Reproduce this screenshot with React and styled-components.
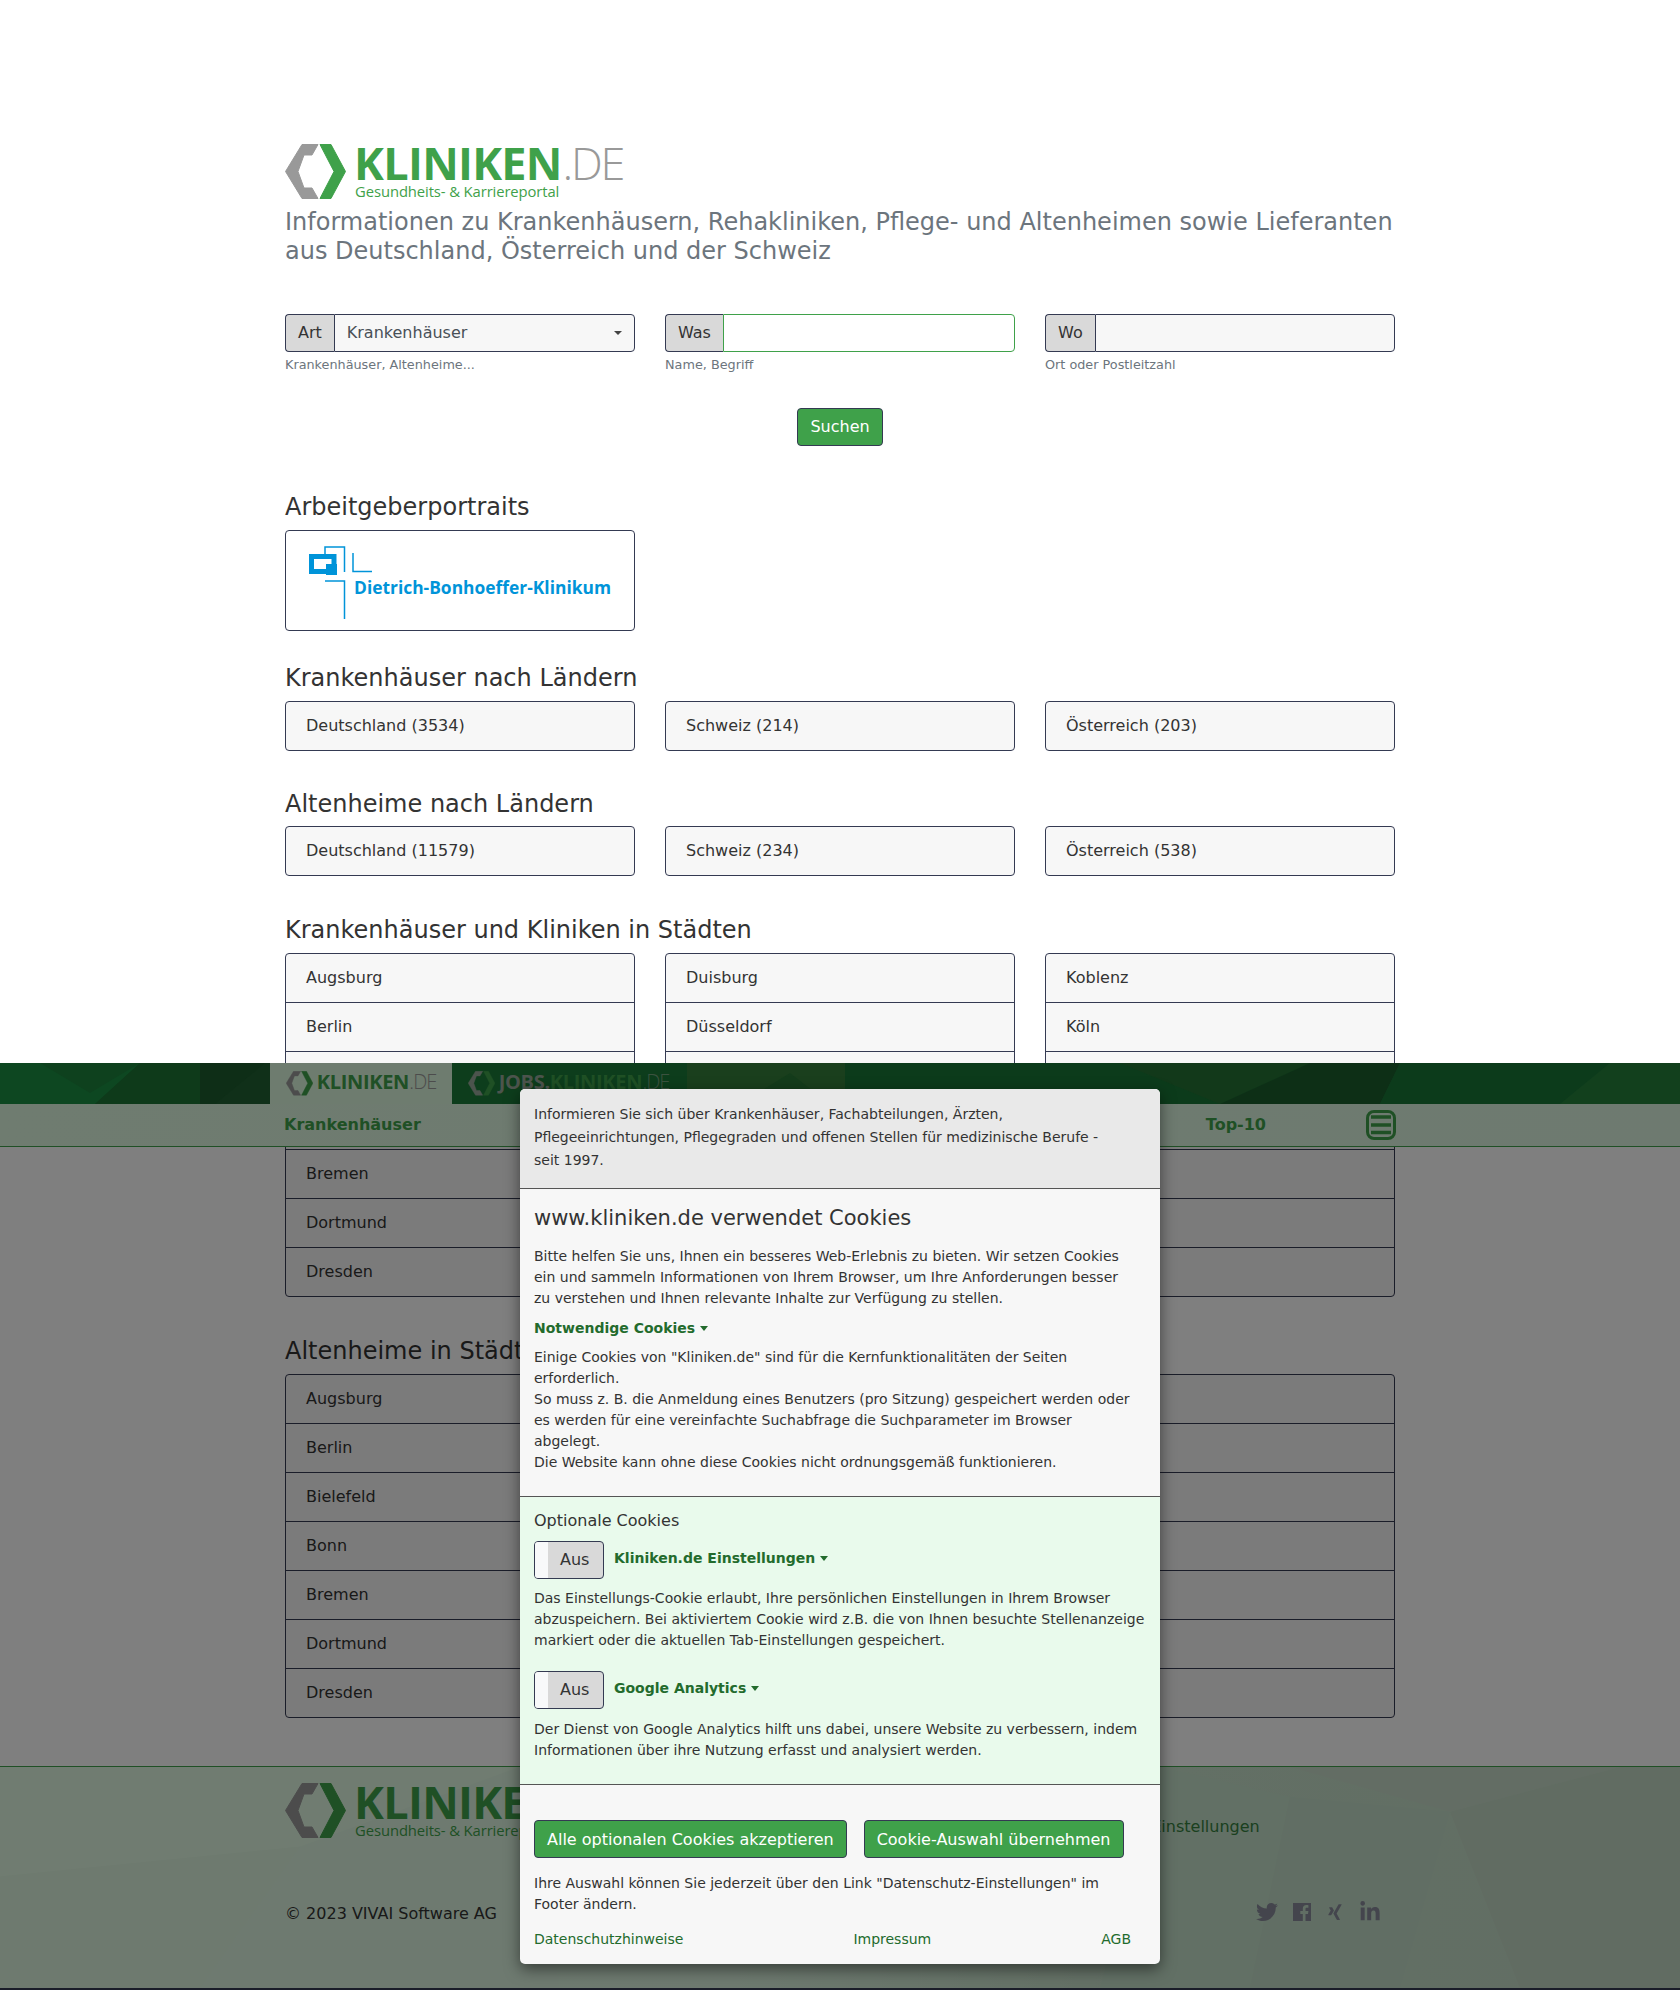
import React from "react";
import styled, { createGlobalStyle } from "styled-components";
import { FaTwitter, FaXing, FaLinkedinIn } from "react-icons/fa";

const cityColumns = [
  ["Augsburg", "Berlin", "Bielefeld", "Bonn", "Bremen", "Dortmund", "Dresden"],
  ["Duisburg", "Düsseldorf", "Essen", "Frankfurt", "Freiburg", "Hamburg", "Hannover"],
  ["Koblenz", "Köln", "Leipzig", "Mainz", "München", "Münster", "Rostock"],
];

const bandPolys = [
  ["0,0 140,0 95,41 0,41", "#1a8f42"],
  ["40,0 140,0 90,30", "#1c823d"],
  ["95,41 140,0 200,0 200,41", "#1c7434"],
  ["200,0 270,0 270,41 200,41", "#1c5c2e"],
  ["215,41 265,0 270,0 270,41", "#206032"],
  ["687,0 845,0 845,41 687,41", "#347f3a"],
  ["740,41 790,10 830,41", "#287836"],
  ["845,0 1120,0 1220,41 845,41", "#187637"],
  ["1120,0 1310,0 1220,41", "#247234"],
  ["1310,0 1400,0 1380,41 1220,41", "#1b5e2d"],
  ["1400,0 1610,0 1560,41 1380,41", "#197637"],
  ["1610,0 1680,0 1680,41 1560,41", "#24803b"],
];

const footerPolys = [
  ["0,0 520,0 300,80 0,110", "#e0f8e2"],
  ["300,80 520,0 560,222 200,222", "#dcf5e0"],
  ["0,110 300,80 200,222 0,222", "#dcf4de"],
  ["1160,0 1290,30 1250,222 1100,222", "#c4e0ca"],
  ["1290,30 1450,45 1400,222 1250,222", "#c2ddc8"],
  ["1450,45 1620,0 1680,0 1680,222 1520,222", "#c3d8c4"],
  ["1290,0 1620,0 1450,45", "#c6dbc8"],
];

const GlobalStyle = createGlobalStyle`
  html, body {
    margin: 0;
    padding: 0;
    background: #fff;
  }

  body {
    font-family: "DejaVu Sans", sans-serif;
    font-size: 16px;
    line-height: 1.5;
    color: #333;
  }

  * {
    box-sizing: border-box;
  }
`;

const Page = styled.div`
  position: relative;
  width: 1680px;
  height: 1990px;
  overflow: hidden;
`;

const Main = styled.main`
  width: 1110px;
  margin: 0 auto;
  padding-top: 144px;
`;

const LogoWrap = styled.div`
  display: flex;
  align-items: flex-start;
  font-size: ${props => props.$size}px;
  font-family: "Open Sans", sans-serif;
  line-height: 1;
`;

const LogoMark = styled.svg`
  flex: none;
  width: 1.356em;
  height: 1.222em;
`;

const LogoText = styled.div`
  margin-left: 0.18em;
`;

const LogoName = styled.div`
  display: flex;
  height: 0.84em;
  line-height: 0.84em;
  margin-top: ${props => props.$small ? "0.14em" : "0"};
  letter-spacing: -0.016em;
  font-weight: 700;
  color: ${props => props.$color || "#3fa14a"};
`;

const LogoTld = styled.span`
  margin-left: 0.02em;
  font-weight: 300;
  letter-spacing: -0.05em;
  color: ${props => props.$color || "#999"};
`;

const LogoPrefix = styled.span`
  color: #99a89b;
  font-weight: 700;
`;

const LogoClaim = styled.div`
  margin: 1px 0 0 1px;
  font-size: 14.8px;
  line-height: 16px;
  letter-spacing: -0.1px;
  color: #3fa14a;
  white-space: nowrap;
`;

const Tagline = styled.h2`
  margin: 9px 0 0;
  font-size: 24px;
  font-weight: 400;
  line-height: 29px;
  color: #6c757d;
`;

const SearchForm = styled.form`
  display: grid;
  grid-template-columns: repeat(3, 350px);
  column-gap: 30px;
  margin-top: 48px;
`;

const Field = styled.div`
  display: flex;
  flex-direction: column;
`;

const InputGroup = styled.div`
  display: flex;
  height: 38px;
`;

const GroupLabel = styled.span`
  display: flex;
  align-items: center;
  padding: 0 12px;
  background: #d9d9d9;
  border: 1px solid #343a52;
  border-right: 0;
  border-radius: 4px 0 0 4px;
  color: #333;
`;

const GroupControl = styled.div`
  position: relative;
  flex: 1;
  display: flex;
  align-items: center;
  padding: 0 12px;
  background: ${props => props.$active ? "#fff" : "#f7f7f7"};
  border: 1px solid ${props => props.$active ? "#3fa14a" : "#343a52"};
  border-radius: 0 4px 4px 0;
  color: #495057;
`;

const Caret = styled.i`
  position: absolute;
  right: 12px;
  top: 16px;
  border-top: 4px solid #444;
  border-left: 4px solid transparent;
  border-right: 4px solid transparent;
`;

const HelpText = styled.small`
  margin-top: 3px;
  font-size: 12.8px;
  line-height: 19px;
  color: #6c757d;
`;

const SubmitRow = styled.div`
  display: flex;
  justify-content: center;
  margin-top: 34px;
`;

const GreenButton = styled.button`
  height: 38px;
  padding: 0 12px;
  background: #3fa14a;
  border: 1px solid #343a52;
  border-radius: 4px;
  color: #fff;
  font-family: inherit;
  font-size: 16px;
`;

const Section = styled.section`
  margin-top: ${props => props.$top}px;
`;

const SectionTitle = styled.h4`
  margin: 0 0 8px;
  font-size: 24px;
  font-weight: 400;
  line-height: 28.8px;
  color: #333;
`;

const PortraitCard = styled.a`
  display: block;
  width: 350px;
  height: 101px;
  background: #fff;
  border: 1px solid #343a52;
  border-radius: 4px;
`;

const PortraitLogo = styled.svg`
  display: block;
  margin: -1px;
  width: 350px;
  height: 101px;
`;

const ListGrid = styled.div`
  display: grid;
  grid-template-columns: repeat(3, 350px);
  column-gap: 30px;
`;

const ItemList = styled.ul`
  margin: 0;
  padding: 0;
  list-style: none;
  background: #f7f7f7;
  border: 1px solid #343a52;
  border-radius: 4px;
`;

const Item = styled.li`
  height: ${props => props.$first ? 48 : 49}px;
  padding: 0 20px;
  line-height: 48px;
  color: #333;
  border-top: ${props => props.$first ? "0" : "1px solid #343a52"};
`;

const Footer = styled.footer`
  position: relative;
  margin-top: 48px;
  height: 224px;
  padding-top: 16px;
  background: linear-gradient(100deg, #def8e0 0%, #dcf5e0 45%, #c6e0ca 68%, #c4dcc8 100%);
  border-top: 1px solid #3fa14a;
  border-bottom: 2px solid #343a52;
`;

const PolyBackground = styled.svg`
  position: absolute;
  left: 0;
  top: 0;
  width: 100%;
  height: 100%;
`;

const FooterInner = styled.div`
  position: relative;
  width: 1110px;
  margin: 0 auto;
`;

const FooterTop = styled.div`
  display: grid;
  grid-template-columns: repeat(3, 350px);
  column-gap: 30px;
`;

const FooterLink = styled.a`
  align-self: end;
  margin-bottom: -1px;
  color: #36803f;
  white-space: nowrap;
`;

const FooterBottom = styled.div`
  display: flex;
  justify-content: space-between;
  align-items: center;
  margin-top: 64px;
  height: 24px;
`;

const Copyright = styled.span`
  color: #333;
`;

const SocialIcons = styled.div`
  display: flex;
  align-items: center;
  gap: 15px;
  margin: 0 14px 3px 0;
  color: #888b9a;

  svg {
    display: block;
  }
`;

const Header = styled.header`
  position: absolute;
  left: 0;
  top: 1063px;
  width: 100%;
`;

const TabBand = styled.div`
  position: relative;
  height: 41px;
  background: #1b7a38;
`;

const Tabs = styled.div`
  position: relative;
  display: flex;
  width: 1140px;
  height: 41px;
  margin: 0 auto;
`;

const Tab = styled.a`
  display: flex;
  align-items: center;
  width: ${props => props.$width}px;
  padding-left: ${props => props.$pad}px;
  background: ${props => props.$active ? "#dcf8de" : "#1b7a38"};
`;

const NavBar = styled.nav`
  display: flex;
  justify-content: space-between;
  align-items: center;
  height: 43px;
  padding: 0 284px;
  background: linear-gradient(90deg, #def8e0, #dcf5e0);
  border-bottom: 1px solid #3fa14a;
`;

const NavLink = styled.a`
  font-weight: 700;
  font-size: 16px;
  color: #3fa14a;
`;

const NavRight = styled.div`
  display: flex;
  align-items: center;
  gap: 100px;
`;

const MenuIcon = styled.svg`
  display: block;
  width: 30px;
  height: 30px;
`;

const Overlay = styled.div`
  position: absolute;
  left: 0;
  top: 1063px;
  width: 100%;
  height: 927px;
  background: rgba(0, 0, 0, 0.5);
`;

const Modal = styled.div`
  position: absolute;
  left: 520px;
  top: 1089px;
  width: 640px;
  height: 875px;
  background: #f7f7f7;
  border-radius: 5px;
  box-shadow: 0 5px 15px rgba(0, 0, 0, 0.5);
  overflow: hidden;
  font-size: 14px;
  line-height: 21px;
  color: #333;
`;

const ModalIntro = styled.div`
  height: 100px;
  padding: 14px 20px 0 14px;
  background: #e9e9e9;
  line-height: 23px;
  border-bottom: 1px solid #555;
`;

const ModalBody = styled.div`
  height: 308px;
  padding: 14px 24px 0 14px;
  border-bottom: 1px solid #555;
`;

const ModalTitle = styled.h5`
  margin: 0 0 13px;
  font-size: 21px;
  font-weight: 400;
  line-height: 30px;
  color: #333;
`;

const Paragraph = styled.p`
  margin: 0;
`;

const Disclosure = styled.a`
  display: inline-flex;
  align-items: center;
  gap: 5px;
  font-weight: 700;
  color: #236b2d;
`;

const DisclosureRow = styled.div`
  margin: 9px 0 8px;
`;

const DisclosureCaret = styled.i`
  border-top: 5px solid #236b2d;
  border-left: 4.5px solid transparent;
  border-right: 4.5px solid transparent;
`;

const OptionalPanel = styled.div`
  height: 288px;
  padding: 12px 14px 0;
  background: #e9faec;
  border-bottom: 1px solid #555;
`;

const OptionalTitle = styled.div`
  font-size: 16px;
  line-height: 24px;
  color: #333;
`;

const ToggleRow = styled.div`
  display: flex;
  align-items: center;
  gap: 10px;
  margin-top: ${props => props.$top}px;
  margin-bottom: ${props => props.$bottom}px;

  ${Disclosure} {
    margin-bottom: 3px;
  }
`;

const Toggle = styled.div`
  display: flex;
  width: 70px;
  height: 38px;
  background: #d9d9d9;
  border: 1px solid #343a52;
  border-radius: 4px;
  overflow: hidden;
  font-size: 16px;
  line-height: 36px;
  color: #333;
`;

const ToggleHandle = styled.span`
  flex: none;
  width: 13px;
  background: #f8f9fa;
`;

const ToggleLabel = styled.span`
  flex: 1;
  padding-left: 12px;
`;

const ModalFooter = styled.div`
  padding: 35px 14px 0;
`;

const ModalActions = styled.div`
  display: flex;
  gap: 17px;
`;

const FootNote = styled.p`
  margin: 15px 0 0;
`;

const LegalLinks = styled.div`
  display: flex;
  justify-content: space-between;
  margin-top: 14px;
  padding-right: 15px;
`;

const LegalLink = styled.a`
  color: #236b2d;
`;

const Polys = ({ items, width, height }) => (
  <PolyBackground viewBox={`0 0 ${width} ${height}`} preserveAspectRatio="none">
    {items.map(([points, fill]) => <polygon key={points} points={points} fill={fill} />)}
  </PolyBackground>
);

const HexMark = ({ gray = "#999", green = "#3fa14a" }) => (
  <LogoMark viewBox="0 0 61 55">
    <path
      d="M17 0.5 H33 L27 11 H19 L13 27.5 L19 44 H27 L33 54.5 H17 L0.5 27.5 Z"
      fill={gray} stroke={gray} strokeLinejoin="round"
    />
    <path
      d="M35 0.5 H46 L60.5 27.5 L46 54.5 H35 L49 27.5 Z"
      fill={green} stroke={green} strokeLinejoin="round"
    />
  </LogoMark>
);

const FacebookIcon = () => (
  <svg width="18" height="18" viewBox="0 0 18 18" fill="currentColor">
    <path
      fillRule="evenodd"
      d="M0 0H18V18H12.5V11H15L15.4 8H12.5V6.2C12.5 5.3 12.8 4.8 13.9 4.8H15.4V2.2C15.1 2.2 14.3 2.1 13.3 2.1C11.2 2.1 9.8 3.4 9.8 5.8V8H7.3V11H9.8V18H0Z"
    />
  </svg>
);

const Logo = () => (
  <LogoWrap $size={45}>
    <HexMark />
    <LogoText>
      <LogoName>KLINIKEN<LogoTld>.DE</LogoTld></LogoName>
      <LogoClaim>Gesundheits- &amp; Karriereportal</LogoClaim>
    </LogoText>
  </LogoWrap>
);

const Links = ({ items }) => (
  <ListGrid>
    {items.map(label => (
      <ItemList key={label}>
        <Item $first>{label}</Item>
      </ItemList>
    ))}
  </ListGrid>
);

const CityLists = () => (
  <ListGrid>
    {cityColumns.map(column => (
      <ItemList key={column[0]}>
        {column.map((city, i) => <Item key={city} $first={i === 0}>{city}</Item>)}
      </ItemList>
    ))}
  </ListGrid>
);

const App = () => (
  <Page>
    <GlobalStyle />
    <Main>
      <Logo />
      <Tagline>
        Informationen zu Krankenhäusern, Rehakliniken, Pflege- und Altenheimen sowie Lieferanten aus Deutschland, Österreich und der Schweiz
      </Tagline>

      <SearchForm>
        <Field>
          <InputGroup>
            <GroupLabel>Art</GroupLabel>
            <GroupControl>Krankenhäuser<Caret /></GroupControl>
          </InputGroup>
          <HelpText>Krankenhäuser, Altenheime...</HelpText>
        </Field>
        <Field>
          <InputGroup>
            <GroupLabel>Was</GroupLabel>
            <GroupControl $active />
          </InputGroup>
          <HelpText>Name, Begriff</HelpText>
        </Field>
        <Field>
          <InputGroup>
            <GroupLabel>Wo</GroupLabel>
            <GroupControl />
          </InputGroup>
          <HelpText>Ort oder Postleitzahl</HelpText>
        </Field>
      </SearchForm>
      <SubmitRow>
        <GreenButton type="button">Suchen</GreenButton>
      </SubmitRow>

      <Section $top={47}>
        <SectionTitle>Arbeitgeberportraits</SectionTitle>
        <PortraitCard>
          <PortraitLogo viewBox="0 0 350 101">
            <g fill="none" stroke="#0094d9">
              <path d="M40 24 V17 H59.5 V42" strokeWidth="1.5" />
              <path d="M68 23 V41.5 H87" strokeWidth="1.5" />
              <path d="M40 51 H59.5 V89" strokeWidth="1.5" />
              <path d="M41 41.5 H26.5 V26.5 H49 V36" strokeWidth="5" />
            </g>
            <rect x="41" y="34" width="11" height="11" fill="#0094d9" />
            <text
              x="69" y="63.5" fill="#0094d9" fontFamily="Open Sans, sans-serif"
              fontWeight="700" fontSize="17" textLength="257" lengthAdjust="spacingAndGlyphs"
            >
              Dietrich-Bonhoeffer-Klinikum
            </text>
          </PortraitLogo>
        </PortraitCard>
      </Section>

      <Section $top={33}>
        <SectionTitle>Krankenhäuser nach Ländern</SectionTitle>
        <Links items={["Deutschland (3534)", "Schweiz (214)", "Österreich (203)"]} />
      </Section>

      <Section $top={39}>
        <SectionTitle>Altenheime nach Ländern</SectionTitle>
        <Links items={["Deutschland (11579)", "Schweiz (234)", "Österreich (538)"]} />
      </Section>

      <Section $top={40}>
        <SectionTitle>Krankenhäuser und Kliniken in Städten</SectionTitle>
        <CityLists />
      </Section>

      <Section $top={40}>
        <SectionTitle>Altenheime in Städten</SectionTitle>
        <CityLists />
      </Section>
    </Main>

    <Footer>
      <Polys items={footerPolys} width={1680} height={222} />
      <FooterInner>
        <FooterTop>
          <Logo />
          <span />
          <FooterLink>Datenschutz-Einstellungen</FooterLink>
        </FooterTop>
        <FooterBottom>
          <Copyright>© 2023 VIVAI Software AG</Copyright>
          <SocialIcons>
            <FaTwitter size={22} />
            <FacebookIcon />
            <FaXing size={18} />
            <FaLinkedinIn size={22} />
          </SocialIcons>
        </FooterBottom>
      </FooterInner>
    </Footer>

    <Header>
      <TabBand>
        <Polys items={bandPolys} width={1680} height={41} />
        <Tabs>
          <Tab $active $width={182} $pad={16}>
            <LogoWrap $size={20}>
              <HexMark />
              <LogoText>
                <LogoName $small>KLINIKEN<LogoTld>.DE</LogoTld></LogoName>
              </LogoText>
            </LogoWrap>
          </Tab>
          <Tab $width={235} $pad={16}>
            <LogoWrap $size={20}>
              <HexMark gray="#99a89b" green="#3fa14a" />
              <LogoText>
                <LogoName $small $color="#3fa14a">
                  <LogoPrefix>JOBS.</LogoPrefix>KLINIKEN<LogoTld $color="#77a57f">.DE</LogoTld>
                </LogoName>
              </LogoText>
            </LogoWrap>
          </Tab>
        </Tabs>
      </TabBand>
      <NavBar>
        <NavLink>Krankenhäuser</NavLink>
        <NavRight>
          <NavLink>Top-10</NavLink>
          <MenuIcon viewBox="0 0 30 30">
            <rect x="1.5" y="1.5" width="27" height="27" rx="6.5" fill="none" stroke="#3fa14a" strokeWidth="3" />
            <path d="M5 7 H25 M5 15 H25 M5 22.5 H25" stroke="#3fa14a" strokeWidth="3.5" />
          </MenuIcon>
        </NavRight>
      </NavBar>
    </Header>

    <Overlay />

    <Modal>
      <ModalIntro>
        Informieren Sie sich über Krankenhäuser, Fachabteilungen, Ärzten, Pflegeeinrichtungen, Pflegegraden und offenen Stellen für medizinische Berufe - seit&nbsp;1997.
      </ModalIntro>
      <ModalBody>
        <ModalTitle>www.kliniken.de verwendet Cookies</ModalTitle>
        <Paragraph>
          Bitte helfen Sie uns, Ihnen ein besseres Web-Erlebnis zu bieten. Wir setzen Cookies ein und sammeln Informationen von Ihrem Browser, um Ihre Anforderungen besser zu verstehen und Ihnen relevante Inhalte zur Verfügung zu stellen.
        </Paragraph>
        <DisclosureRow>
          <Disclosure>Notwendige Cookies <DisclosureCaret /></Disclosure>
        </DisclosureRow>
        <Paragraph>
          Einige Cookies von "Kliniken.de" sind für die Kernfunktionalitäten der Seiten erforderlich.<br />
          So muss z. B. die Anmeldung eines Benutzers (pro Sitzung) gespeichert werden oder es werden für eine vereinfachte Suchabfrage die Suchparameter im Browser abgelegt.<br />
          Die Website kann ohne diese Cookies nicht ordnungsgemäß funktionieren.
        </Paragraph>
      </ModalBody>
      <OptionalPanel>
        <OptionalTitle>Optionale Cookies</OptionalTitle>
        <ToggleRow $top={8} $bottom={9}>
          <Toggle><ToggleHandle /><ToggleLabel>Aus</ToggleLabel></Toggle>
          <Disclosure>Kliniken.de Einstellungen <DisclosureCaret /></Disclosure>
        </ToggleRow>
        <Paragraph>
          Das Einstellungs-Cookie erlaubt, Ihre persönlichen Einstellungen in Ihrem Browser abzuspeichern. Bei aktiviertem Cookie wird z.B. die von Ihnen besuchte Stellenanzeige markiert oder die aktuellen Tab-Einstellungen gespeichert.
        </Paragraph>
        <ToggleRow $top={20} $bottom={10}>
          <Toggle><ToggleHandle /><ToggleLabel>Aus</ToggleLabel></Toggle>
          <Disclosure>Google Analytics <DisclosureCaret /></Disclosure>
        </ToggleRow>
        <Paragraph>
          Der Dienst von Google Analytics hilft uns dabei, unsere Website zu verbessern, indem Informationen über ihre Nutzung erfasst und analysiert werden.
        </Paragraph>
      </OptionalPanel>
      <ModalFooter>
        <ModalActions>
          <GreenButton type="button">Alle optionalen Cookies akzeptieren</GreenButton>
          <GreenButton type="button">Cookie-Auswahl übernehmen</GreenButton>
        </ModalActions>
        <FootNote>
          Ihre Auswahl können Sie jederzeit über den Link "Datenschutz-Einstellungen" im Footer ändern.
        </FootNote>
        <LegalLinks>
          <LegalLink>Datenschutzhinweise</LegalLink>
          <LegalLink>Impressum</LegalLink>
          <LegalLink>AGB</LegalLink>
        </LegalLinks>
      </ModalFooter>
    </Modal>
  </Page>
);

export default App;
